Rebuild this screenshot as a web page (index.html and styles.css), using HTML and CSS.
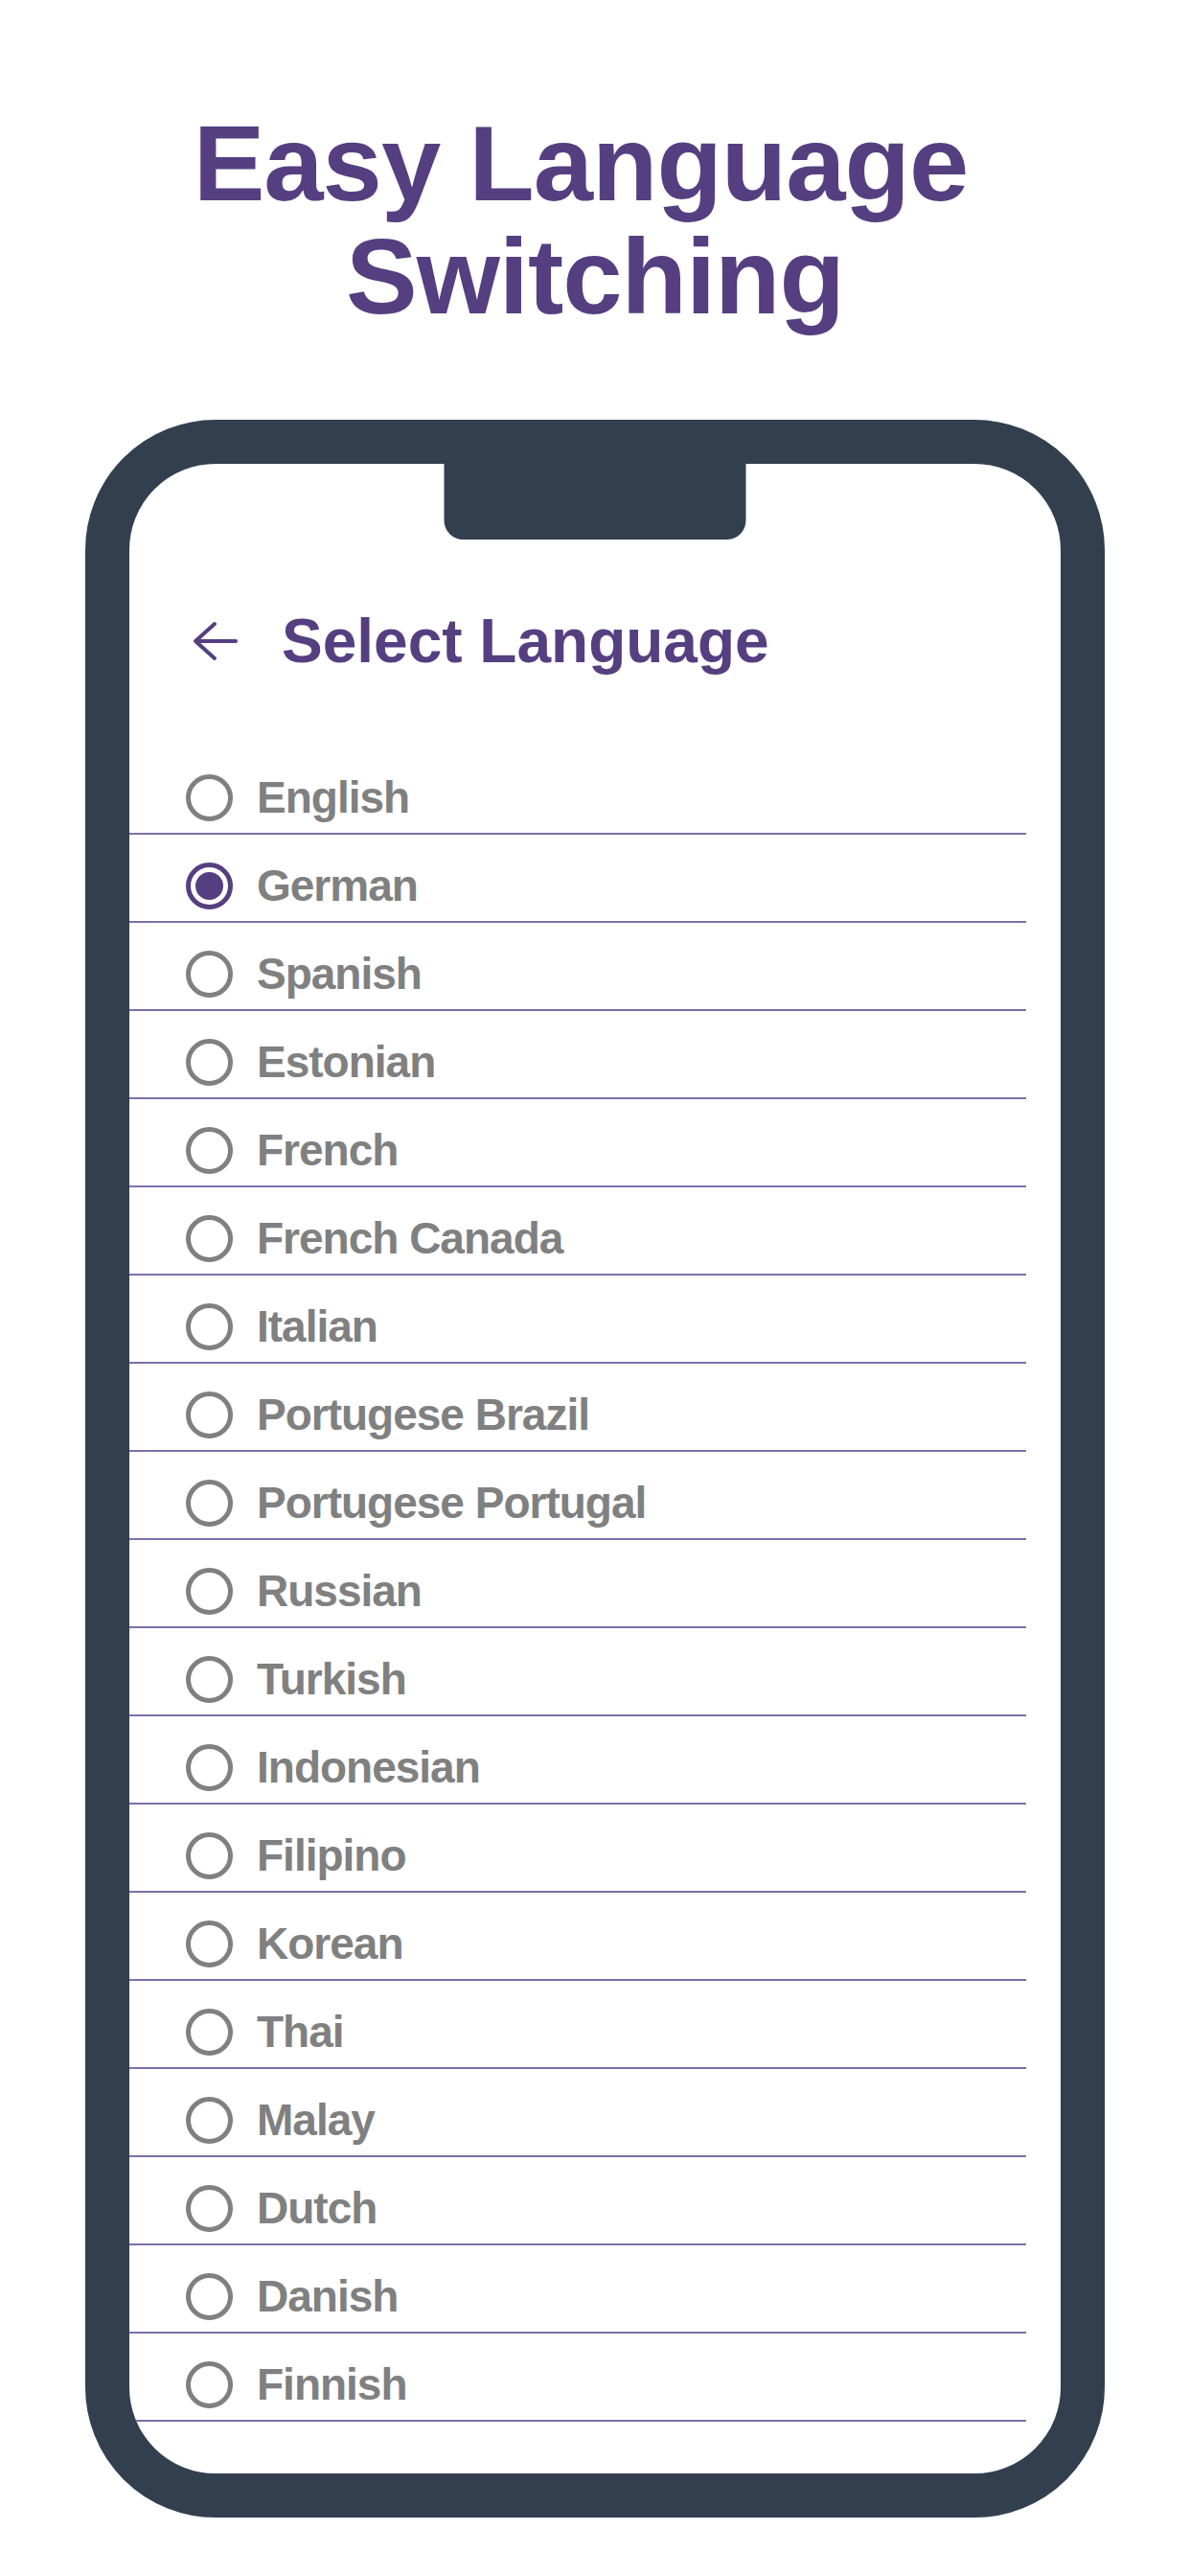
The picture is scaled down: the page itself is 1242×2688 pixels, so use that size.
FILE: index.html
```html
<!DOCTYPE html>
<html lang="en">
<head>
<meta charset="utf-8">
<title>Easy Language Switching</title>
<link rel="stylesheet" href="styles.css">
</head>
<body>
<h1 class="headline">Easy Language&nbsp;<br>Switching</h1>
<div class="phone">
  <div class="notch"></div>
  <div class="screen">
    <div class="app-header">
      <svg class="back" width="50" height="44" viewBox="0 0 50 44" aria-hidden="true">
        <path d="M46 22 H5 M24 4 L4 22 L24 40" fill="none" stroke="#553f80" stroke-width="4" stroke-linecap="round" stroke-linejoin="round"/>
      </svg>
      <h2 class="app-title">Select Language</h2>
    </div>
    <ul class="lang-list">
      <li class="lang-row"><span class="radio"></span><span class="lang-name">English</span></li>
      <li class="lang-row"><span class="radio radio-on"></span><span class="lang-name">German</span></li>
      <li class="lang-row"><span class="radio"></span><span class="lang-name">Spanish</span></li>
      <li class="lang-row"><span class="radio"></span><span class="lang-name">Estonian</span></li>
      <li class="lang-row"><span class="radio"></span><span class="lang-name">French</span></li>
      <li class="lang-row"><span class="radio"></span><span class="lang-name">French Canada</span></li>
      <li class="lang-row"><span class="radio"></span><span class="lang-name">Italian</span></li>
      <li class="lang-row"><span class="radio"></span><span class="lang-name">Portugese Brazil</span></li>
      <li class="lang-row"><span class="radio"></span><span class="lang-name">Portugese Portugal</span></li>
      <li class="lang-row"><span class="radio"></span><span class="lang-name">Russian</span></li>
      <li class="lang-row"><span class="radio"></span><span class="lang-name">Turkish</span></li>
      <li class="lang-row"><span class="radio"></span><span class="lang-name">Indonesian</span></li>
      <li class="lang-row"><span class="radio"></span><span class="lang-name">Filipino</span></li>
      <li class="lang-row"><span class="radio"></span><span class="lang-name">Korean</span></li>
      <li class="lang-row"><span class="radio"></span><span class="lang-name">Thai</span></li>
      <li class="lang-row"><span class="radio"></span><span class="lang-name">Malay</span></li>
      <li class="lang-row"><span class="radio"></span><span class="lang-name">Dutch</span></li>
      <li class="lang-row"><span class="radio"></span><span class="lang-name">Danish</span></li>
      <li class="lang-row"><span class="radio"></span><span class="lang-name">Finnish</span></li>
    </ul>
  </div>
</div>
</body>
</html>
```
FILE: styles.css
```css
* { box-sizing: border-box; }
html, body {
  margin: 0;
  padding: 0;
  background: #ffffff;
}
body {
  width: 1242px;
  height: 2688px;
  overflow: hidden;
  font-family: "Liberation Sans", Arial, sans-serif;
}
.headline {
  margin: 112px 0 0 0;
  text-align: center;
  font-size: 112px;
  line-height: 118px;
  font-weight: 700;
  letter-spacing: -1px;
  color: #553f80;
}
.phone {
  position: relative;
  margin: 90px 0 0 89px;
  width: 1064px;
  height: 2189px;
  border: 46px solid #323f4f;
  border-radius: 136px;
  background: #ffffff;
}
.notch {
  position: absolute;
  top: 0;
  left: 50%;
  transform: translateX(-50%);
  width: 315px;
  height: 79px;
  background: #323f4f;
  border-radius: 0 0 20px 20px;
  z-index: 2;
}
.screen {
  height: 100%;
  padding-top: 148px;
  overflow: hidden;
  border-radius: 90px;
}
.app-header {
  display: flex;
  align-items: center;
  height: 74px;
  padding-left: 65px;
  gap: 44px;
}
.back { display: block; flex: none; }
.app-title {
  margin: 0;
  font-size: 64px;
  line-height: 74px;
  font-weight: 700;
  letter-spacing: 0;
  color: #553f80;
}
.lang-list {
  list-style: none;
  margin: 73px 0 0 0;
  padding: 0;
  width: 936px;
}
.lang-row {
  display: flex;
  align-items: center;
  gap: 25px;
  height: 92px;
  padding: 28px 0 12px 59px;
  border-bottom: 2px solid #7d6fab;
}
.radio {
  flex: none;
  width: 49px;
  height: 49px;
  border: 5px solid #808080;
  border-radius: 50%;
  position: relative;
}
.radio-on {
  border-color: #553f80;
}
.radio-on::after {
  content: "";
  position: absolute;
  left: 5px;
  top: 5px;
  width: 29px;
  height: 29px;
  border-radius: 50%;
  background: #553f80;
}
.lang-name {
  font-size: 46px;
  line-height: 50px;
  font-weight: 700;
  letter-spacing: -1px;
  color: #808080;
}
```
